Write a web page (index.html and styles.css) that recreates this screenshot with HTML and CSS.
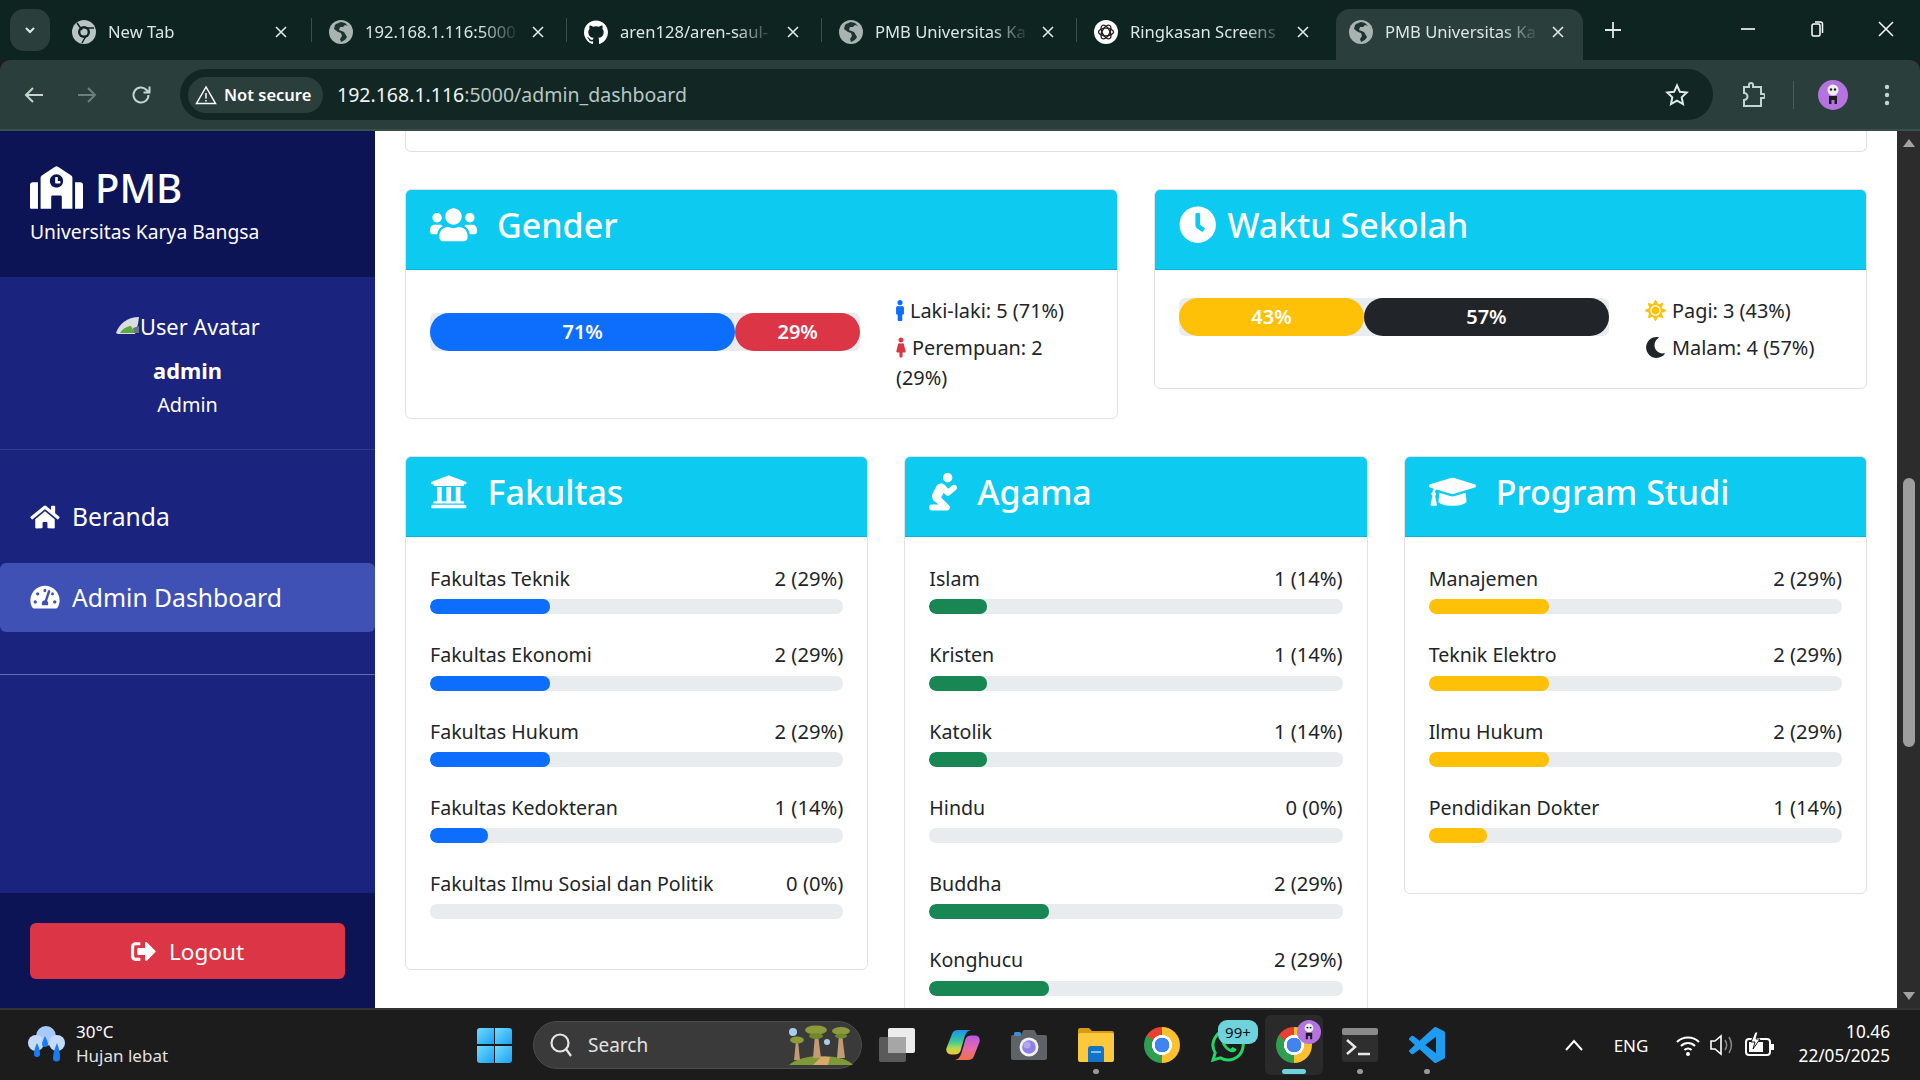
FILE: index.html
```html
<!DOCTYPE html>
<html lang="en">
<head>
  <meta charset="UTF-8">
  <title>PMB Universitas Karya Bangsa</title>
  <link rel="stylesheet" href="styles.css">
</head>
<body>

  <!-- shared icons -->
  <svg class="defs" aria-hidden="true">
    <symbol id="i-globe" viewBox="0 0 24 24">
      <circle cx="12" cy="12" r="12" fill="#a9b4b1"/>
      <path d="M12 2c-2 1-4 1-6 3l-1 4 4 3 3 1 1 3-2 3 1 3c3-1 5-3 6-5l-3-5-5-2 1-3 3 0 2-2 3 1-3-3z" fill="#1d3531"/>
    </symbol>
    <symbol id="i-close" viewBox="0 0 12 12">
      <path d="M1 1l10 10M11 1L1 11" stroke="#dfe9e6" stroke-width="1.6" fill="none"/>
    </symbol>
    <symbol id="i-github" viewBox="0 0 24 24">
      <path fill="#fff" d="M12 .5C5.37.5 0 5.87 0 12.5c0 5.3 3.44 9.8 8.2 11.38.6.11.82-.26.82-.58v-2.03c-3.34.73-4.04-1.61-4.04-1.61-.55-1.39-1.34-1.76-1.34-1.76-1.09-.74.08-.73.08-.73 1.2.09 1.84 1.24 1.84 1.24 1.07 1.83 2.81 1.3 3.5 1 .1-.78.42-1.3.76-1.6-2.67-.3-5.47-1.33-5.47-5.93 0-1.31.47-2.38 1.24-3.22-.13-.3-.54-1.52.12-3.18 0 0 1-.32 3.3 1.23a11.5 11.5 0 0 1 6 0c2.28-1.55 3.29-1.23 3.29-1.23.66 1.66.25 2.88.12 3.18.77.84 1.23 1.91 1.23 3.22 0 4.61-2.81 5.63-5.48 5.92.43.37.81 1.1.81 2.22v3.29c0 .32.22.7.83.58A12 12 0 0 0 24 12.5C24 5.87 18.63.5 12 .5z"/>
    </symbol>
    <symbol id="i-panda" viewBox="0 0 30 30">
      <circle cx="15" cy="15" r="15" fill="#b573e0"/>
      <circle cx="15" cy="10" r="5.5" fill="#eee"/>
      <circle cx="13" cy="9.5" r="1.2" fill="#222"/>
      <circle cx="17" cy="9.5" r="1.2" fill="#222"/>
      <path d="M11 16h8v8h-2.5v-4h-3v4H11z" fill="#1c1c1c"/>
    </symbol>
  </svg>

  <!-- browser chrome -->
  <div class="tabstrip">
    <div class="tab-search">
      <svg width="14" height="14" viewBox="0 0 14 14"><path d="M3 5l4 4 4-4" stroke="#dfe9e6" stroke-width="2" fill="none"/></svg>
    </div>
    <div class="tabs">
      <div class="tab tab-first">
        <svg class="fav" viewBox="0 0 24 24">
          <circle cx="12" cy="12" r="12" fill="#b9c5c2"/>
          <circle cx="12" cy="12" r="6" fill="#0e2420"/>
          <circle cx="12" cy="12" r="3.6" fill="#b9c5c2"/>
          <path d="M5 3l5 7M22 8h-9M10 23l4-7" stroke="#0e2420" stroke-width="1.5"/>
        </svg>
        <span class="tab-title">New Tab</span>
        <svg class="tab-close"><use href="#i-close"/></svg>
      </div>
      <div class="tab">
        <svg class="fav"><use href="#i-globe"/></svg>
        <span class="tab-title">192.168.1.116:5000</span>
        <svg class="tab-close"><use href="#i-close"/></svg>
      </div>
      <div class="tab">
        <svg class="fav"><use href="#i-github"/></svg>
        <span class="tab-title">aren128/aren-saul-</span>
        <svg class="tab-close"><use href="#i-close"/></svg>
      </div>
      <div class="tab">
        <svg class="fav"><use href="#i-globe"/></svg>
        <span class="tab-title">PMB Universitas Ka</span>
        <svg class="tab-close"><use href="#i-close"/></svg>
      </div>
      <div class="tab tab-last">
        <svg class="fav" viewBox="0 0 24 24">
          <circle cx="12" cy="12" r="12" fill="#fff"/>
          <g fill="none" stroke="#222" stroke-width="1.3">
            <ellipse cx="12" cy="12" rx="7.5" ry="3.8"/>
            <ellipse cx="12" cy="12" rx="7.5" ry="3.8" transform="rotate(60 12 12)"/>
            <ellipse cx="12" cy="12" rx="7.5" ry="3.8" transform="rotate(120 12 12)"/>
          </g>
        </svg>
        <span class="tab-title">Ringkasan Screens</span>
        <svg class="tab-close"><use href="#i-close"/></svg>
      </div>
      <div class="tab tab-active">
        <svg class="fav"><use href="#i-globe"/></svg>
        <span class="tab-title">PMB Universitas Ka</span>
        <svg class="tab-close"><use href="#i-close"/></svg>
      </div>
    </div>
    <svg class="new-tab" width="18" height="18" viewBox="0 0 18 18"><path d="M9 1v16M1 9h16" stroke="#dfe9e6" stroke-width="1.8"/></svg>
    <div class="win-controls">
      <div class="win-btn"><svg width="16" height="16" viewBox="0 0 16 16"><path d="M1 8h14" stroke="#fff" stroke-width="1.6"/></svg></div>
      <div class="win-btn"><svg width="16" height="18" viewBox="0 0 16 18"><path d="M3 5.5A1.5 1.5 0 0 1 4.5 4h5A1.5 1.5 0 0 1 11 5.5v9A1.5 1.5 0 0 1 9.5 16h-5A1.5 1.5 0 0 1 3 14.5zM6 2h5.5a2 2 0 0 1 2 2v9" stroke="#fff" stroke-width="1.5" fill="none"/></svg></div>
      <div class="win-btn"><svg width="16" height="16" viewBox="0 0 16 16"><path d="M1 1l14 14M15 1L1 15" stroke="#fff" stroke-width="1.5"/></svg></div>
    </div>
  </div>

  <div class="toolbar">
    <div class="nav-btn">
      <svg width="22" height="22" viewBox="0 0 22 22"><path d="M20 11H3M10 4l-7 7 7 7" stroke="#c6d4d0" stroke-width="2" fill="none"/></svg>
    </div>
    <div class="nav-btn">
      <svg width="22" height="22" viewBox="0 0 22 22"><path d="M2 11h17M12 4l7 7-7 7" stroke="#6d7f7b" stroke-width="2" fill="none"/></svg>
    </div>
    <div class="nav-btn nav-reload">
      <svg width="22" height="22" viewBox="0 0 22 22"><path d="M18.5 11a7.5 7.5 0 1 1-2.2-5.3L19 8.5M19.5 2.5v6h-6" stroke="#c6d4d0" stroke-width="2" fill="none"/></svg>
    </div>
    <div class="address">
      <div class="chip">
        <svg width="22" height="20" viewBox="0 0 22 20"><path d="M11 2L1.5 18.5h19zM11 8v5.5M11 15v1.5" stroke="#fff" stroke-width="1.5" fill="none"/></svg>
        <span class="chip-text">Not secure</span>
      </div>
      <span class="url"><span class="url-host">192.168.1.116</span>:5000/admin_dashboard</span>
      <svg class="star" width="24" height="24" viewBox="0 0 24 24"><path d="M12 2.5l2.9 6.3 6.8.8-5 4.7 1.3 6.8-6-3.4-6 3.4 1.3-6.8-5-4.7 6.8-.8z" stroke="#dfe9e6" stroke-width="2" fill="none"/></svg>
    </div>
    <svg class="ext" width="24" height="26" viewBox="0 0 24 26"><path d="M3 5h5V3a2 2 0 0 1 4 0v2h8v7h2a2 2 0 0 1 0 4h-2v8H3v-6a3 3 0 0 0 0-7z" stroke="#c6d4d0" stroke-width="2" fill="none"/></svg>
    <div class="tool-sep"></div>
    <svg class="profile"><use href="#i-panda"/></svg>
    <svg class="dots" width="6" height="22" viewBox="0 0 6 22"><circle cx="3" cy="3" r="2.2" fill="#c6d4d0"/><circle cx="3" cy="11" r="2.2" fill="#c6d4d0"/><circle cx="3" cy="19" r="2.2" fill="#c6d4d0"/></svg>
  </div>

  <!-- page -->
  <div class="page">
    <aside class="sidebar">
      <div class="side-head">
        <div class="brand">
          <svg width="53" height="43" viewBox="0 0 640 512"><path fill="#fff" d="M0 224v272c0 8.840 7.160 16 16 16h80V192H32c-17.670 0-32 14.330-32 32zm360-48h-24v-40c0-4.420-3.580-8-8-8h-16c-4.420 0-8 3.580-8 8v64c0 4.420 3.580 8 8 8h48c4.420 0 8-3.580 8-8v-16c0-4.420-3.580-8-8-8zm137.750-63.960l-160-106.670a32 32 0 0 0-35.500 0l-160 106.670A32.020 32.020 0 0 0 128 138.660V512h128V368c0-8.840 7.160-16 16-16h96c8.840 0 16 7.160 16 16v144h128V138.670c0-10.700-5.350-20.700-14.250-26.630zM320 256c-44.180 0-80-35.820-80-80s35.820-80 80-80 80 35.820 80 80-35.820 80-80 80zm288-64h-64v320h80c8.840 0 16-7.160 16-16V224c0-17.670-14.330-32-32-32z"/></svg>
          <span class="brand-name">PMB</span>
        </div>
        <div class="brand-sub">Universitas Karya Bangsa</div>
      </div>

      <div class="side-user">
        <div class="avatar">
          <svg width="25" height="20" viewBox="0 0 25 20"><path d="M1 17C4 8 12 1 24 1l-1 7-3 10H3z" fill="#d9dee3"/><path d="M5 17c3-5 8-7 11-7l4 7z" fill="#62a83e"/><path d="M18 12l6-2v7h-5z" fill="#6b7480"/></svg>
          <span>User Avatar</span>
        </div>
        <div class="user-name">admin</div>
        <div class="user-role">Admin</div>
      </div>

      <nav class="side-nav">
        <a class="nav-item">
          <svg width="30" height="26" viewBox="0 0 576 512"><path fill="#fff" d="M280.370 148.260L96 300.110V464a16 16 0 0 0 16 16l112.060-.29a16 16 0 0 0 15.920-16V368a16 16 0 0 1 16-16h64a16 16 0 0 1 16 16v95.640a16 16 0 0 0 16 16.050L464 480a16 16 0 0 0 16-16V300L295.670 148.260a12.190 12.190 0 0 0-15.300 0zM571.600 251.470L488 182.560V44.050a12 12 0 0 0-12-12h-56a12 12 0 0 0-12 12v72.610L318.470 43a48 48 0 0 0-61 0L4.340 251.470a12 12 0 0 0-1.600 16.900l25.500 31A12 12 0 0 0 45.150 301l235.220-193.740a12.190 12.190 0 0 1 15.300 0L530.900 301a12 12 0 0 0 16.900-1.600l25.500-31a12 12 0 0 0-1.700-16.930z"/></svg>
          <span>Beranda</span>
        </a>
        <a class="nav-item nav-active">
          <svg width="30" height="26" viewBox="0 0 576 512"><path fill="#fff" d="M288 32C128.940 32 0 160.940 0 320c0 52.800 14.250 102.260 39.060 144.800 5.610 9.620 16.300 15.200 27.440 15.200h443c11.140 0 21.830-5.580 27.440-15.200C561.750 422.260 576 372.800 576 320c0-159.060-128.940-288-288-288zm0 64c14.710 0 26.580 10.130 30.320 23.650-1.110 2.260-2.640 4.230-3.450 6.670l-9.220 27.670c-5.130 3.490-10.970 6.010-17.640 6.010-17.670 0-32-14.330-32-32S270.330 96 288 96zM96 384c-17.670 0-32-14.330-32-32s14.330-32 32-32 32 14.330 32 32-14.330 32-32 32zm48-160c-17.670 0-32-14.330-32-32s14.330-32 32-32 32 14.330 32 32-14.330 32-32 32zm246.770-72.410l-61.330 184C343.130 347.330 352 364.540 352 384c0 11.720-3.380 22.550-8.880 32H232.880c-5.500-9.450-8.880-20.280-8.880-32 0-33.940 26.500-61.430 59.900-63.590l61.340-184.010c4.170-12.560 17.730-19.450 30.360-15.170 12.570 4.190 19.350 17.790 15.170 30.360zm14.660 57.200l15.520-46.550c3.470-1.290 7.130-2.230 11.050-2.230 17.670 0 32 14.330 32 32s-14.330 32-32 32c-11.380-.01-20.890-6.280-26.570-15.220zM480 384c-17.670 0-32-14.330-32-32s14.330-32 32-32 32 14.330 32 32-14.330 32-32 32z"/></svg>
          <span>Admin Dashboard</span>
        </a>
        <div class="nav-rule"></div>
      </nav>

      <div class="side-foot">
        <button class="logout">
          <svg width="25" height="25" viewBox="0 0 512 512"><path fill="#fff" d="M497 273L329 441c-15 15-41 4.500-41-17v-96H152c-13.300 0-24-10.700-24-24v-96c0-13.300 10.700-24 24-24h136V88c0-21.400 25.900-32 41-17l168 168c9.300 9.400 9.300 24.600 0 34zM192 436v-40c0-6.600-5.400-12-12-12H96c-17.700 0-32-14.300-32-32V160c0-17.700 14.300-32 32-32h84c6.600 0 12-5.400 12-12V76c0-6.600-5.400-12-12-12H96c-53 0-96 43-96 96v192c0 53 43 96 96 96h84c6.600 0 12-5.400 12-12z"/></svg>
          <span>Logout</span>
        </button>
      </div>
    </aside>

    <main class="main">
      <div class="card-stub"></div>

      <div class="row-two">
        <section class="card">
          <header class="card-head">
            <svg width="47" height="37.5" viewBox="0 0 640 512"><path fill="#fff" d="M96 224c35.300 0 64-28.700 64-64s-28.700-64-64-64-64 28.700-64 64 28.700 64 64 64zm448 0c35.300 0 64-28.700 64-64s-28.700-64-64-64-64 28.700-64 64 28.700 64 64 64zm32 32h-64c-17.600 0-33.500 7.100-45.100 18.600 40.300 22.100 68.900 62 75.100 109.400h66c17.700 0 32-14.300 32-32v-32c0-35.300-28.700-64-64-64zm-256 0c61.900 0 112-50.100 112-112S381.900 32 320 32 208 82.100 208 144s50.100 112 112 112zm76.800 32h-8.300c-20.800 10-43.900 16-68.500 16s-47.600-6-68.500-16h-8.300C179.600 288 128 339.600 128 403.200V432c0 26.500 21.500 48 48 48h288c26.500 0 48-21.500 48-48v-28.800c0-63.600-51.600-115.200-115.200-115.200zm-223.700-13.400C161.500 263.100 145.600 256 128 256H64c-35.300 0-64 28.700-64 64v32c0 17.700 14.300 32 32 32h65.900c6.300-47.400 34.900-87.300 75.200-109.400z"/></svg>
            <h3>Gender</h3>
          </header>
          <div class="card-body split">
            <div class="stack">
              <div class="stack-seg bg-blue" style="width:71%">71%</div>
              <div class="stack-seg bg-red" style="width:29%">29%</div>
            </div>
            <div class="legend">
              <p><svg class="leg-male" width="8" height="21" viewBox="0 0 192 512"><path fill="#0d6efd" d="M96 0c35.346 0 64 28.654 64 64s-28.654 64-64 64-64-28.654-64-64S60.654 0 96 0m48 144h-11.360c-22.711 10.443-49.590 10.894-73.280 0H48c-26.510 0-48 21.490-48 48v136c0 13.255 10.745 24 24 24h16v136c0 13.255 10.745 24 24 24h64c13.255 0 24-10.745 24-24V352h16c13.255 0 24-10.745 24-24V192c0-26.510-21.490-48-48-48z"/></svg>Laki-laki: 5 (71%)</p>
              <p><svg class="leg-female" width="10" height="21" viewBox="0 0 256 512"><path fill="#dc3545" d="M128 0c35.346 0 64 28.654 64 64s-28.654 64-64 64c-35.346 0-64-28.654-64-64S92.654 0 128 0m119.283 354.179l-48-192A24 24 0 0 0 176 144h-11.360c-22.711 10.443-49.590 10.894-73.280 0H80a24 24 0 0 0-23.283 18.179l-48 192C4.935 369.305 16.383 384 32 384h56v104c0 13.255 10.745 24 24 24h32c13.255 0 24-10.745 24-24V384h56c15.591 0 27.071-14.671 23.283-29.821z"/></svg>Perempuan: 2 (29%)</p>
            </div>
          </div>
        </section>

        <section class="card">
          <header class="card-head head-tight">
            <svg width="37.5" height="37.5" viewBox="0 0 512 512"><path fill="#fff" d="M256 8C119 8 8 119 8 256s111 248 248 248 248-111 248-248S393 8 256 8zm92.490 313l-20 25a16 16 0 0 1-22.490 2.500l-67-49.720a40 40 0 0 1-15-31.230V112a16 16 0 0 1 16-16h32a16 16 0 0 1 16 16v144l58 42.500a16 16 0 0 1 2.490 22.500z"/></svg>
            <h3>Waktu Sekolah</h3>
          </header>
          <div class="card-body split">
            <div class="stack">
              <div class="stack-seg bg-yellow" style="width:43%">43%</div>
              <div class="stack-seg bg-dark" style="width:57%">57%</div>
            </div>
            <div class="legend">
              <p><svg class="leg-time" width="21" height="21" viewBox="0 0 512 512"><path fill="#ffc107" d="M256 160c-52.900 0-96 43.100-96 96s43.100 96 96 96 96-43.100 96-96-43.100-96-96-96zm246.400 80.500l-94.700-47.300 33.500-100.400c4.500-13.600-8.400-26.500-21.900-21.900l-100.400 33.500-47.400-94.800c-6.400-12.800-24.600-12.800-31 0l-47.300 94.700L92.700 70.800c-13.600-4.500-26.500 8.400-21.900 21.900l33.500 100.400-94.700 47.400c-12.800 6.400-12.800 24.600 0 31l94.700 47.300-33.500 100.500c-4.500 13.600 8.400 26.500 21.900 21.900l100.400-33.500 47.300 94.700c6.400 12.800 24.600 12.800 31 0l47.300-94.700 100.400 33.500c13.600 4.500 26.500-8.400 21.900-21.900l-33.500-100.400 94.700-47.300c13-6.500 13-24.700.2-31.100zm-155.900 106c-49.900 49.900-131.100 49.900-181 0-49.900-49.900-49.900-131.100 0-181 49.900-49.900 131.100-49.900 181 0 49.900 49.900 49.900 131.100 0 181z"/></svg>Pagi: 3 (43%)</p>
              <p><svg class="leg-time" width="21" height="21" viewBox="0 0 512 512"><path fill="#212529" d="M283.211 512c78.962 0 151.079-35.925 198.857-94.792 7.068-8.708-.639-21.430-11.562-19.350-124.203 23.654-238.262-71.576-238.262-196.954 0-72.222 38.662-138.635 101.498-174.394 9.686-5.512 7.250-20.197-3.756-22.230A258.156 258.156 0 0 0 283.211 0c-141.309 0-256 114.511-256 256 0 141.309 114.511 256 256 256z"/></svg>Malam: 4 (57%)</p>
            </div>
          </div>
        </section>
      </div>

      <div class="row-three">
        <section class="card">
          <header class="card-head">
            <svg width="37.5" height="37.5" viewBox="0 0 512 512"><path fill="#fff" d="M496 128v16a8 8 0 0 1-8 8h-24v12c0 6.627-5.373 12-12 12H60c-6.627 0-12-5.373-12-12v-12H24a8 8 0 0 1-8-8v-16a8 8 0 0 1 4.941-7.392l232-88a7.996 7.996 0 0 1 6.118 0l232 88A8 8 0 0 1 496 128zm-24 304H40c-13.255 0-24 10.745-24 24v16a8 8 0 0 0 8 8h464a8 8 0 0 0 8-8v-16c0-13.255-10.745-24-24-24zM96 192v192H60c-6.627 0-12 5.373-12 12v20h416v-20c0-6.627-5.373-12-12-12h-36V192h-64v192h-64V192h-64v192h-64V192H96z"/></svg>
            <h3>Fakultas</h3>
          </header>
          <div class="card-body">
            <div class="stat"><div class="stat-line"><span>Fakultas Teknik</span><span>2 (29%)</span></div><div class="bar"><div class="fill bg-blue" style="width:29%"></div></div></div>
            <div class="stat"><div class="stat-line"><span>Fakultas Ekonomi</span><span>2 (29%)</span></div><div class="bar"><div class="fill bg-blue" style="width:29%"></div></div></div>
            <div class="stat"><div class="stat-line"><span>Fakultas Hukum</span><span>2 (29%)</span></div><div class="bar"><div class="fill bg-blue" style="width:29%"></div></div></div>
            <div class="stat"><div class="stat-line"><span>Fakultas Kedokteran</span><span>1 (14%)</span></div><div class="bar"><div class="fill bg-blue" style="width:14%"></div></div></div>
            <div class="stat"><div class="stat-line"><span>Fakultas Ilmu Sosial dan Politik</span><span>0 (0%)</span></div><div class="bar"></div></div>
          </div>
        </section>

        <section class="card">
          <header class="card-head">
            <svg width="28" height="37.5" viewBox="0 0 384 512"><path fill="#fff" d="M256 128c35.350 0 64-28.650 64-64S291.350 0 256 0s-64 28.650-64 64 28.650 64 64 64zm-30.630 169.750c14.060 16.720 39 19.090 55.970 5.220l88-72.020c17.090-13.980 19.590-39.190 5.620-56.280-13.970-17.110-39.190-19.590-56.310-5.620l-57.440 47-38.910-46.310c-15.440-18.390-39.220-27.920-64-25.330-24.190 2.480-45.250 16.270-56.370 36.920l-49.370 92.030c-23.400 43.640-8.690 96.370 34.190 123.750L131.560 432H40c-22.090 0-40 17.910-40 40s17.910 40 40 40h208c34.080 0 53.770-42.790 28.280-68.280L166.420 333.860l34.800-64.870 24.150 28.760z"/></svg>
            <h3>Agama</h3>
          </header>
          <div class="card-body">
            <div class="stat"><div class="stat-line"><span>Islam</span><span>1 (14%)</span></div><div class="bar"><div class="fill bg-green" style="width:14%"></div></div></div>
            <div class="stat"><div class="stat-line"><span>Kristen</span><span>1 (14%)</span></div><div class="bar"><div class="fill bg-green" style="width:14%"></div></div></div>
            <div class="stat"><div class="stat-line"><span>Katolik</span><span>1 (14%)</span></div><div class="bar"><div class="fill bg-green" style="width:14%"></div></div></div>
            <div class="stat"><div class="stat-line"><span>Hindu</span><span>0 (0%)</span></div><div class="bar"></div></div>
            <div class="stat"><div class="stat-line"><span>Buddha</span><span>2 (29%)</span></div><div class="bar"><div class="fill bg-green" style="width:29%"></div></div></div>
            <div class="stat"><div class="stat-line"><span>Konghucu</span><span>2 (29%)</span></div><div class="bar"><div class="fill bg-green" style="width:29%"></div></div></div>
          </div>
        </section>

        <section class="card">
          <header class="card-head">
            <svg width="47" height="37.5" viewBox="0 0 640 512"><path fill="#fff" d="M622.340 153.200L343.400 67.500c-15.200-4.670-31.600-4.670-46.790 0L17.660 153.200c-23.540 7.230-23.540 38.360 0 45.590l48.630 14.940c-10.670 13.190-17.230 29.280-17.880 46.900C38.780 266.150 32 276.110 32 288c0 10.780 5.680 19.850 13.860 25.650L20.330 428.530C18.110 438.520 25.710 448 35.940 448h56.110c10.240 0 17.840-9.480 15.620-19.470L82.140 313.650C90.320 307.850 96 298.780 96 288c0-11.570-6.470-21.250-15.660-26.870.76-15.020 8.440-28.300 20.690-36.720L296.600 284.500c9.060 2.780 26.440 6.250 46.790 0l278.950-85.700c23.550-7.240 23.550-38.360 0-45.600zM352.790 315.090c-28.530 8.760-52.840 3.920-65.590 0l-145.020-44.550L128 384c0 35.350 85.960 64 192 64s192-28.650 192-64l-14.180-113.470-145.030 44.560z"/></svg>
            <h3>Program Studi</h3>
          </header>
          <div class="card-body">
            <div class="stat"><div class="stat-line"><span>Manajemen</span><span>2 (29%)</span></div><div class="bar"><div class="fill bg-yellow" style="width:29%"></div></div></div>
            <div class="stat"><div class="stat-line"><span>Teknik Elektro</span><span>2 (29%)</span></div><div class="bar"><div class="fill bg-yellow" style="width:29%"></div></div></div>
            <div class="stat"><div class="stat-line"><span>Ilmu Hukum</span><span>2 (29%)</span></div><div class="bar"><div class="fill bg-yellow" style="width:29%"></div></div></div>
            <div class="stat"><div class="stat-line"><span>Pendidikan Dokter</span><span>1 (14%)</span></div><div class="bar"><div class="fill bg-yellow" style="width:14%"></div></div></div>
          </div>
        </section>
      </div>
    </main>

    <div class="scrollbar">
      <svg width="14" height="10" viewBox="0 0 14 10"><path d="M7 1l6 8H1z" fill="#a3a3a3"/></svg>
      <div class="thumb"></div>
      <svg width="14" height="10" viewBox="0 0 14 10"><path d="M7 9l6-8H1z" fill="#a3a3a3"/></svg>
    </div>
  </div>

  <!-- windows taskbar -->
  <footer class="taskbar">
    <div class="weather">
      <svg width="38" height="36" viewBox="0 0 38 36">
        <circle cx="18" cy="10" r="10" fill="#a9c8fb"/><circle cx="8" cy="17" r="8" fill="#c6dbfc"/><circle cx="29" cy="17" r="8" fill="#c6dbfc"/>
        <path d="M17 10c2 4 3 6 3 8a3 3 0 0 1-6 0c0-2 1-4 3-8zM9 17c2 4 3 8 3 11a3 3 0 0 1-6 0c0-3 1-7 3-11zM29 17c2 5 3 10 3 15a3.5 3.5 0 0 1-7 0c0-5 2-10 4-15z" fill="#1a7cf2"/>
      </svg>
      <div class="weather-text">
        <div class="temp">30°C</div>
        <div>Hujan lebat</div>
      </div>
    </div>

    <div class="start">
      <span class="pane pane-a"></span><span class="pane pane-b"></span><span class="pane pane-c"></span><span class="pane pane-d"></span>
    </div>

    <div class="search">
      <svg width="24" height="26" viewBox="0 0 24 26"><circle cx="11" cy="11" r="8.5" stroke="#e6e6e6" stroke-width="2.2" fill="none"/><path d="M17 17l5 7" stroke="#e6e6e6" stroke-width="2.2"/></svg>
      <span class="search-text">Search</span>
      <svg class="scenery" width="68" height="40" viewBox="0 0 68 40">
        <path d="M2 40c6-6 20-9 32-9s26 2 32 9z" fill="#7d9a36"/>
        <path d="M26 40l8-8h9l-2 8z" fill="#d9a86c"/>
        <path d="M9 16h2l2 19H7zM28 10h3l3 23h-8zM52 9h3l3 24h-8z" fill="#c39b73"/>
        <ellipse cx="10" cy="15" rx="7" ry="3.5" fill="#8d9a3a"/>
        <ellipse cx="29" cy="5" rx="11" ry="4.5" fill="#8d9a3a"/>
        <ellipse cx="29" cy="11" rx="7" ry="3" fill="#6e8a2a"/>
        <ellipse cx="54" cy="6" rx="9" ry="4" fill="#8d9a3a"/>
        <ellipse cx="54" cy="11" rx="6" ry="2.5" fill="#6e8a2a"/>
        <circle cx="6" cy="7" r="4" fill="#a9cdea"/><circle cx="40" cy="17" r="3" fill="#a9cdea"/>
      </svg>
    </div>

    <div class="apps">
      <div class="app">
        <svg width="37" height="34" viewBox="0 0 37 34"><rect x="0" y="9" width="27" height="25" rx="2" fill="#5a5a5a"/><rect x="9" y="0" width="27" height="25" rx="2" fill="#ececec"/><rect x="9" y="9" width="18" height="16" fill="#a6a6a6"/></svg>
      </div>
      <div class="app">
        <svg width="34" height="30" viewBox="0 0 34 30">
          <defs>
            <linearGradient id="cp1" x1="0" y1="0" x2="0" y2="1"><stop offset="0" stop-color="#1f8fe8"/><stop offset=".45" stop-color="#35c6a0"/><stop offset=".75" stop-color="#b6d94a"/><stop offset="1" stop-color="#f4c430"/></linearGradient>
            <linearGradient id="cp2" x1="0" y1="0" x2="0" y2="1"><stop offset="0" stop-color="#b65ae0"/><stop offset=".55" stop-color="#e86aa8"/><stop offset="1" stop-color="#f2703f"/></linearGradient>
          </defs>
          <path d="M12 0h13c-4 1-5.500 4-6.500 7l-4 14c-1 2.500-3 3.500-6 3.500H5c-3.500 0-5.500-3-4.500-6.500L6 4c.8-2.500 3-4 6-4z" fill="url(#cp1)"/>
          <path d="M22 30H9c4-1 5.500-4 6.500-7l4-14c1-2.500 3-3.500 6-3.500H29c3.500 0 5.500 3 4.500 6.500L28 26c-.8 2.500-3 4-6 4z" fill="url(#cp2)"/>
        </svg>
      </div>
      <div class="app">
        <svg width="36" height="30" viewBox="0 0 36 30"><path d="M0 7a2 2 0 0 1 2-2h8l2-4a2 2 0 0 1 1.500-1h9a2 2 0 0 1 1.500 1l2 4h8a2 2 0 0 1 2 2v21a2 2 0 0 1-2 2H2a2 2 0 0 1-2-2z" fill="#5f6368"/><rect x="3" y="2" width="7" height="4" rx="1.5" fill="#3f8fd8"/><circle cx="18" cy="17" r="9.5" fill="#f2f2f2"/><circle cx="18" cy="17" r="6.8" fill="#8f80e6"/><circle cx="16" cy="15" r="3.5" fill="#b4a6f2"/></svg>
      </div>
      <div class="app has-dot">
        <svg width="36" height="36" viewBox="0 0 36 36"><path d="M0 3a2 2 0 0 1 2-2h9l3 3h20a2 2 0 0 1 2 2v6H0z" fill="#d69a14"/><rect x="0" y="6" width="36" height="29" rx="2" fill="#fdc93c"/><path d="M10 22a3 3 0 0 1 3-3h10a3 3 0 0 1 3 3v13H10z" fill="#1273c9"/><rect x="13" y="24" width="10" height="2" fill="#7fc0f0"/></svg>
      </div>
      <div class="app"><div class="chrome-logo"></div></div>
      <div class="app">
        <svg width="36" height="36" viewBox="0 0 36 36"><path d="M18 3a15 15 0 0 0-12.800 22.800L3 33l7.500-2.100A15 15 0 1 0 18 3z" fill="none" stroke="#25d366" stroke-width="3"/><path d="M13 11c-2 2-2 5 1 9s7 6 10 5c2-.6 2.500-2 2.500-3l-4-2-2 2c-2-1-4-3-5-5l2-2-2-4z" fill="#25d366"/></svg>
        <span class="badge">99+</span>
      </div>
      <div class="app app-active">
        <div class="chrome-logo"></div>
        <svg class="app-avatar"><use href="#i-panda"/></svg>
      </div>
      <div class="app has-dot">
        <svg width="36" height="34" viewBox="0 0 36 34"><rect width="36" height="34" rx="3" fill="#2e2e2e"/><rect width="36" height="7" rx="2" fill="#8a8a8a"/><path d="M5 12l8 7-8 7" stroke="#e8e8e8" stroke-width="2.5" fill="none"/><path d="M16 26h12" stroke="#e8e8e8" stroke-width="2.5"/></svg>
      </div>
      <div class="app has-dot">
        <svg width="36" height="36" viewBox="0 0 24 24"><path fill="#1f9cf0" d="M23.150 2.587L18.210.21a1.494 1.494 0 0 0-1.705.29l-9.460 8.630-4.120-3.128a.999.999 0 0 0-1.276.057L.327 7.261A1 1 0 0 0 .326 8.740L3.899 12 .326 15.260a1 1 0 0 0 .001 1.479L1.650 17.940a.999.999 0 0 0 1.276.057l4.120-3.128 9.460 8.630a1.492 1.492 0 0 0 1.704.29l4.942-2.377A1.500 1.500 0 0 0 24 20.060V3.939a1.500 1.500 0 0 0-.85-1.352zm-5.146 14.861L10.826 12l7.178-5.448v10.896z"/></svg>
      </div>
    </div>

    <div class="tray">
      <svg class="tray-up" width="20" height="12" viewBox="0 0 20 12"><path d="M2 11l8-9 8 9" stroke="#fff" stroke-width="2" fill="none"/></svg>
      <span class="lang">ENG</span>
      <svg class="tray-wifi" width="26" height="24" viewBox="0 0 26 24"><path d="M2 9c6-6 16-6 22 0M6 13c4-4 10-4 14 0M9.500 17c2-2 5-2 7 0" stroke="#fff" stroke-width="2.2" fill="none"/><circle cx="13" cy="21" r="2" fill="#fff"/></svg>
      <svg class="tray-sound" width="26" height="24" viewBox="0 0 26 24"><path d="M2 8h4l6-5v18l-6-5H2z" stroke="#fff" stroke-width="1.6" fill="none"/><path d="M16 7c2 3 2 7 0 10M20 4c3 5 3 11 0 16" stroke="#888" stroke-width="1.5" fill="none"/></svg>
      <svg class="tray-batt" width="30" height="28" viewBox="0 0 30 28"><rect x="1" y="8" width="24" height="16" rx="3" stroke="#fff" stroke-width="2" fill="none"/><rect x="4" y="11" width="14" height="10" fill="#fff"/><rect x="26" y="13" width="3" height="6" fill="#fff"/><path d="M10 1L6 11h4l-2 7 7-10h-4l2-7z" fill="#fff" stroke="#1c1c1c"/></svg>
      <div class="clock">
        <div>10.46</div>
        <div>22/05/2025</div>
      </div>
    </div>
  </footer>

</body>
</html>
```

FILE: styles.css
```css
/* General */
* {
  box-sizing: border-box;
}

html, body {
  margin: 0;
  width: 1920px;
  height: 1080px;
  overflow: hidden;
}

body {
  font-family: "Noto Sans", "Open Sans", sans-serif;
  font-size: 19.6px;
  color: #212529;
  background: #1c1c1c;
  display: flex;
  flex-direction: column;
}

.defs {
  width: 0;
  height: 0;
  position: absolute;
}

svg {
  flex-shrink: 0;
  display: block;
}

/* Tab strip */
.tabstrip {
  height: 60px;
  flex-shrink: 0;
  background: #0e2420;
  display: flex;
  align-items: flex-end;
  padding-left: 10px;
}

.tab-search {
  width: 40px;
  height: 42px;
  margin-bottom: 9px;
  border-radius: 14px;
  background: #2a3f3b;
  display: flex;
  align-items: center;
  justify-content: center;
}

.tabs {
  display: flex;
  margin-left: 7px;
}

.tab {
  position: relative;
  width: 255px;
  height: 51px;
  padding: 0 23px 6px 17px;
  display: flex;
  align-items: center;
  color: #dbe5e2;
  font-size: 16.6px;
}

.tab-first {
  padding-left: 15px;
  padding-right: 25px;
}

.tab::before {
  content: "";
  position: absolute;
  right: 0;
  top: 9px;
  height: 24px;
  border-right: 1.5px solid #3a4f4b;
}

.tab-last::before {
  display: none;
}

.tab-active {
  width: 247px;
  margin: 0 4px;
  padding-left: 13px;
  padding-right: 19px;
  background: #2a3f3b;
  border-radius: 14px 14px 0 0;
}

.tab-active::before {
  display: none;
}

.fav {
  width: 24px;
  height: 24px;
}

.tab-title {
  flex: 1;
  margin-left: 12px;
  overflow: hidden;
  white-space: nowrap;
  -webkit-mask-image: linear-gradient(90deg, #000 72%, transparent 96%);
  mask-image: linear-gradient(90deg, #000 72%, transparent 96%);
}

.tab-close {
  width: 12px;
  height: 12px;
  margin-left: 6px;
}

.new-tab {
  margin: 0 0 21px 17px;
}

.win-controls {
  margin-left: auto;
  display: flex;
  align-self: flex-start;
}

.win-btn {
  width: 69px;
  height: 58px;
  display: flex;
  align-items: center;
  justify-content: center;
}

/* Toolbar */
.toolbar {
  height: 71px;
  flex-shrink: 0;
  padding: 0 30px 0 7px;
  background: #2a3f3b;
  border-bottom: 2px solid #3a4f4a;
  border-radius: 10px 10px 0 0;
  display: flex;
  align-items: center;
}

.nav-btn {
  width: 53px;
  display: flex;
  justify-content: center;
}

.nav-reload {
  width: 55px;
}

.address {
  flex: 1;
  height: 51px;
  margin-left: 12px;
  padding: 0 24px 0 8px;
  border-radius: 26px;
  background: #122724;
  display: flex;
  align-items: center;
}

.chip {
  width: 135px;
  height: 36px;
  padding-left: 7px;
  border-radius: 18px;
  background: #2a3f3b;
  color: #fff;
  display: flex;
  align-items: center;
}

.chip-text {
  margin-left: 7px;
  font-size: 16.5px;
  font-weight: 600;
  white-space: nowrap;
}

.url {
  margin-left: 14px;
  color: #b8c6c3;
  font-size: 19.5px;
}

.url-host {
  color: #f0f5f4;
}

.star {
  margin-left: auto;
}

.ext {
  margin-left: 28px;
}

.tool-sep {
  width: 1.5px;
  height: 28px;
  margin-left: 28px;
  background: #4a5f5b;
}

.profile {
  width: 30px;
  height: 30px;
  margin-left: 24px;
}

.dots {
  margin-left: 36px;
}

/* Page frame */
.page {
  height: 877px;
  flex-shrink: 0;
  display: flex;
  background: #fff;
  overflow: hidden;
}

/* Sidebar */
.sidebar {
  width: 375px;
  flex-shrink: 0;
  background: #1a237e;
  color: #fff;
  display: flex;
  flex-direction: column;
}

.side-head {
  height: 146px;
  padding: 35px 30px 0;
  background: #0d1456;
}

.brand {
  display: flex;
  align-items: center;
  gap: 12px;
}

.brand-name {
  font-size: 40px;
  line-height: 43px;
  font-weight: 500;
}

.brand-sub {
  margin-top: 8px;
  font-size: 19.3px;
  line-height: 30px;
}

.side-user {
  height: 173px;
  padding-top: 35px;
  border-bottom: 1px solid rgba(255, 255, 255, 0.1);
  text-align: center;
}

.avatar {
  width: 145px;
  height: 28px;
  margin: 0 auto;
  overflow: hidden;
  display: flex;
  align-items: center;
  white-space: nowrap;
  font-size: 21.8px;
}

.user-name {
  margin-top: 14px;
  font-weight: 700;
  font-size: 21.8px;
  line-height: 34px;
}

.user-role {
  font-size: 19.8px;
  line-height: 33px;
}

.side-nav {
  flex: 1;
  padding-top: 32px;
}

.nav-item {
  height: 69px;
  margin-bottom: 11.5px;
  padding: 0 30px;
  border-radius: 6px;
  display: flex;
  align-items: center;
  gap: 12px;
  font-size: 24.7px;
}

.nav-active {
  margin-bottom: 0;
  background: #3f51b5;
}

.nav-rule {
  margin-top: 42px;
  border-top: 1px solid rgba(200, 225, 230, 0.4);
}

.side-foot {
  height: 115px;
  padding: 30px;
  background: #0d1456;
}

.logout {
  width: 100%;
  height: 56px;
  padding-top: 2px;
  border: none;
  border-radius: 6px;
  background: #dc3545;
  color: #fff;
  font: inherit;
  font-size: 22.6px;
  display: flex;
  align-items: center;
  justify-content: center;
  gap: 13px;
}

/* Main area */
.main {
  flex: 1;
  min-width: 0;
  padding: 0 30px;
  overflow: hidden;
}

.card-stub {
  height: 21px;
  border: 1px solid #dee2e6;
  border-top: none;
  border-radius: 0 0 6px 6px;
}

.row-two {
  margin-top: 36.5px;
  display: grid;
  grid-template-columns: 1fr 1fr;
  gap: 37.5px 36px;
  align-items: start;
}

.row-three {
  margin-top: 37px;
  display: grid;
  grid-template-columns: repeat(3, 1fr);
  gap: 37.5px 36px;
  align-items: start;
}

.card {
  border: 1px solid #dee2e6;
  border-radius: 6px;
  background: #fff;
  overflow: hidden;
}

.card-head {
  height: 80px;
  padding: 0 24px 9px;
  background: #0dcaf0;
  border-bottom: 1px solid #0bb5d8;
  color: #fff;
  display: flex;
  align-items: center;
  gap: 20px;
}

.head-tight {
  gap: 11px;
}

.card-head h3 {
  margin: 0;
  font-size: 34px;
  line-height: 40px;
  font-weight: 500;
}

.card-body {
  padding: 26px 24px 25px;
}

.split {
  display: flex;
  align-items: center;
}

/* Stacked bars */
.stack {
  width: 430px;
  height: 37.5px;
  flex-shrink: 0;
  margin-bottom: 25px;
  margin-right: 36px;
  border-radius: 6px;
  background: #e9ecef;
  display: flex;
}

.stack-seg {
  border-radius: 19px;
  color: #fff;
  font-size: 20px;
  font-weight: 600;
  display: flex;
  align-items: center;
  justify-content: center;
}

.legend {
  width: 196px;
  flex-shrink: 0;
  font-size: 19.9px;
}

.legend p {
  margin: 0 0 7.5px;
  line-height: 30px;
}

.legend p:last-child {
  margin-bottom: 0;
}

.legend svg {
  display: inline-block;
  vertical-align: -3px;
}

.leg-male {
  margin-right: 6px;
}

.leg-female {
  margin-right: 6px;
}

.leg-time {
  margin-right: 6px;
}

.bg-blue {
  background: #0d6efd;
}

.bg-red {
  background: #dc3545;
}

.bg-yellow {
  background: #ffc107;
}

.bg-dark {
  background: #212529;
}

.bg-green {
  background: #198754;
}

/* Stat rows */
.stat {
  margin-bottom: 25px;
}

.stat-line {
  height: 30px;
  margin-bottom: 6.25px;
  line-height: 30px;
  display: flex;
  align-items: baseline;
  justify-content: space-between;
  white-space: nowrap;
}

.stat-line span:last-child {
  font-size: 20.2px;
}

.bar {
  height: 15px;
  border-radius: 7px;
  background: #e9ecef;
  overflow: hidden;
}

.fill {
  height: 100%;
  border-radius: 7px;
}

/* Scrollbar */
.scrollbar {
  width: 23px;
  flex-shrink: 0;
  padding: 7px 0;
  background: #2c2c2c;
  display: flex;
  flex-direction: column;
  align-items: center;
}

.thumb {
  width: 12px;
  height: 269px;
  margin-top: 330px;
  margin-bottom: auto;
  border-radius: 6px;
  background: #9e9e9e;
}

/* Taskbar */
.taskbar {
  flex: 1;
  border-top: 2px solid #333;
  background: #1c1c1c;
  color: #fff;
  display: flex;
  align-items: center;
}

.weather {
  width: 477px;
  padding-left: 28px;
  padding-bottom: 2px;
  display: flex;
  align-items: center;
  gap: 10px;
  font-size: 17px;
  line-height: 24px;
  color: #e2e2e2;
}

.temp {
  color: #fff;
}

.start {
  width: 35px;
  height: 35px;
  display: grid;
  grid-template-columns: 1fr 1fr;
  gap: 1.5px;
}

.pane {
  background: linear-gradient(135deg, #6fdcff, #1ba1f5);
}

.pane-a {
  border-radius: 3px 0 0 0;
}

.pane-b {
  border-radius: 0 3px 0 0;
}

.pane-c {
  border-radius: 0 0 0 3px;
}

.pane-d {
  border-radius: 0 0 3px 0;
}

.search {
  width: 329px;
  height: 48px;
  margin-left: 21px;
  padding: 0 6px 0 15px;
  border-radius: 24px;
  background: #3a3a3a;
  border: 1px solid #4c4c4c;
  display: flex;
  align-items: center;
}

.search-text {
  margin-left: 15px;
  font-size: 19px;
  color: #e2e2e2;
}

.scenery {
  margin-left: auto;
}

.apps {
  margin-left: 2px;
  display: flex;
}

.app {
  position: relative;
  width: 66.2px;
  height: 60px;
  display: flex;
  align-items: center;
  justify-content: center;
}

.has-dot::after {
  content: "";
  position: absolute;
  left: 30px;
  bottom: 1px;
  width: 6px;
  height: 5px;
  border-radius: 3px;
  background: #9a9a9a;
}

.app-active {
  width: 58px;
  margin: 0 4.1px;
  border-radius: 6px;
  background: #2a2a2a;
}

.app-active::after {
  content: "";
  position: absolute;
  left: 17px;
  bottom: 1px;
  width: 24px;
  height: 5px;
  border-radius: 3px;
  background: #6fd3dc;
}

.chrome-logo {
  width: 36px;
  height: 36px;
  border-radius: 50%;
  background:
    radial-gradient(circle closest-side, #3f84f0 0 40%, #fff 42% 55%, transparent 57%),
    conic-gradient(#fbc02d 60deg 180deg, #2e9e4f 180deg 300deg, #e8412f 300deg 360deg, #e8412f 0 60deg);
}

.badge {
  position: absolute;
  left: 23px;
  top: 5px;
  width: 40px;
  height: 24px;
  border-radius: 9px;
  background: #6fd3dc;
  color: #111;
  font-size: 15px;
  line-height: 24px;
  text-align: center;
}

.app-avatar {
  position: absolute;
  left: 32px;
  top: 5px;
  width: 24px;
  height: 24px;
}

.tray {
  margin-left: auto;
  padding-right: 30px;
  display: flex;
  align-items: center;
}

.lang {
  width: 40px;
  margin-left: 27px;
  font-size: 17px;
  text-align: center;
}

.tray-wifi {
  margin-left: 24px;
}

.tray-sound {
  margin-left: 8px;
}

.tray-batt {
  margin-left: 10px;
}

.clock {
  width: 92px;
  margin-left: 23px;
  padding-bottom: 2px;
  font-size: 17.2px;
  line-height: 24px;
  text-align: right;
  white-space: nowrap;
}
```
